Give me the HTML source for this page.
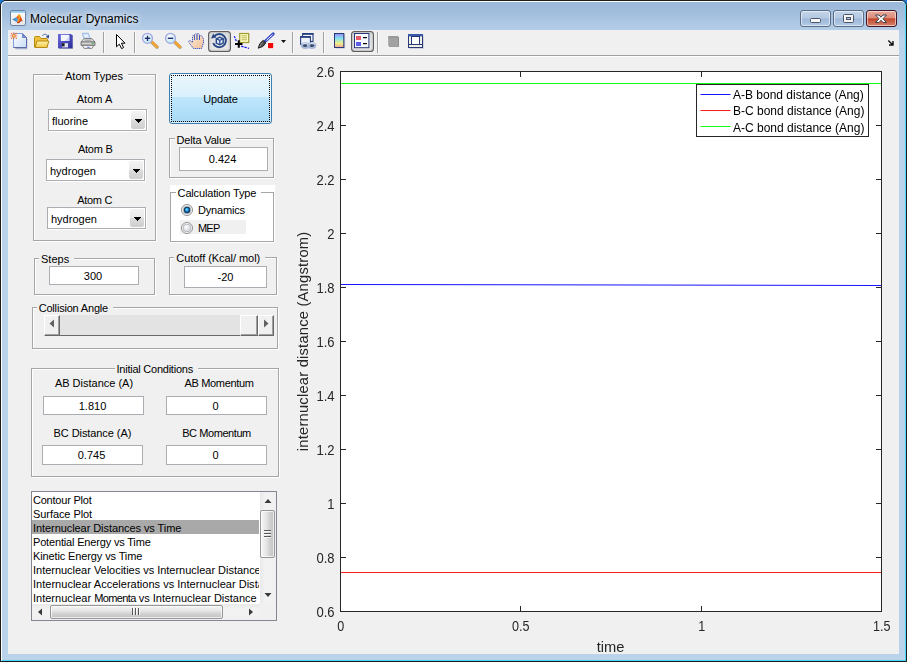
<!DOCTYPE html>
<html>
<head>
<meta charset="utf-8">
<title>Molecular Dynamics</title>
<style>
html,body{margin:0;padding:0;}
body{width:907px;height:662px;overflow:hidden;background:#1a78d0;font-family:"Liberation Sans",sans-serif;font-size:11px;color:#000;position:relative;}
.abs{position:absolute;}
#win{position:absolute;left:0;top:0;width:905px;height:660px;border:1px solid #1c1c1c;border-radius:6px 6px 0 0;background:#bad2ea;overflow:hidden;}
#winin{position:absolute;left:0;top:0;width:903px;height:658px;border:1px solid #fff;border-right-color:#45d8f6;border-bottom-color:#45d8f6;border-radius:5px 5px 0 0;
 background:linear-gradient(to bottom,#9cb8d8 0px,#a3bfde 12px,#b4cde8 28px,#bad2ea 40px);}
#title{position:absolute;left:30px;top:12px;font-size:12px;line-height:14px;color:#000;white-space:nowrap;letter-spacing:0.03px;text-shadow:0 0 5px rgba(255,255,255,.9),0 0 8px rgba(255,255,255,.7),0 0 12px rgba(255,255,255,.5);}
#client{position:absolute;left:8px;top:30px;width:891px;height:624px;background:#f0f0f0;}
#tbline{position:absolute;left:0;top:25px;width:891px;height:1px;background:#a0a0a0;}
#tbline2{position:absolute;left:0;top:26px;width:891px;height:1px;background:#fff;}
.cap{position:absolute;top:10px;height:15px;border:1px solid #5a6c84;border-radius:3px;box-shadow:inset 0 0 0 1px rgba(255,255,255,.55);
 background:linear-gradient(to bottom,#c3d5ea 0,#b4c8e2 48%,#9fb8d8 52%,#b2cae6 100%);}
#close{background:linear-gradient(to bottom,#e9aa9c 0,#dc8c7a 46%,#c2462a 52%,#d4836c 100%);border-color:#431422;}
.t{position:absolute;white-space:nowrap;line-height:13px;font-size:11px;}
.c{text-align:center;}
.panel{position:absolute;border:1px solid #a6a6a6;box-shadow:1px 1px 0 #fff, inset 1px 1px 0 #fff;}
.ptitle{position:absolute;background:#f0f0f0;white-space:nowrap;line-height:13px;font-size:11px;padding:0 5px 0 2px;}
.edit{position:absolute;background:#fff;border:1px solid #abadb3;box-sizing:border-box;text-align:center;font-size:11px;}
.combo{position:absolute;background:#fff;border:1px solid #abadb3;box-sizing:border-box;font-size:11px;box-shadow:1px 1px 0 #fff;}
.combo span{position:absolute;left:3px;top:5px;line-height:13px;}
.combo i{position:absolute;right:1px;top:1px;width:14px;height:18px;background:linear-gradient(to bottom,#f2f2f2 0,#eaeaea 47%,#dcdcdc 50%,#cfcfcf 100%);border-radius:2px;}
.combo i svg{position:absolute;left:4px;top:8px;}
.combo span{color:#000;}
#upd{position:absolute;left:169px;top:73px;width:101px;height:49px;border:1px solid #3c7fb1;border-radius:3px;
 background:linear-gradient(to bottom,#eaf6fd 0,#d9f0fc 46%,#bee6fd 47%,#a7d9f5 100%);box-shadow:inset 0 0 0 1px rgba(255,255,255,.6);}
#updin{position:absolute;left:1px;top:1px;right:1px;bottom:1px;border:1px dotted #000;}
#upd span{position:absolute;left:0;width:100%;text-align:center;top:19px;line-height:13px;font-size:11px;letter-spacing:-0.2px;}
.radio{position:absolute;width:12px;height:12px;}
.sbtn{position:absolute;box-sizing:border-box;background:#f0f0f0;border-left:1px solid #fff;border-top:1px solid #fff;border-right:1px solid #696969;border-bottom:1px solid #696969;box-shadow:inset -1px -1px 0 #a0a0a0;}
#lb{position:absolute;left:31px;top:491px;width:244px;height:128px;border:1px solid #828790;background:#fff;overflow:hidden;}
#lbitems{position:absolute;left:0;top:0;width:227px;height:112px;overflow:hidden;}
#lbitems div{height:14px;line-height:16px;font-size:11px;white-space:nowrap;padding-left:1px;overflow:hidden;}
#lbitems div.sel{background:#a9a9a9;}
</style>
</head>
<body>
<div id="win"><div id="winin"></div></div>
<div id="title">Molecular Dynamics</div>
<!-- caption buttons -->
<div class="cap" style="left:800px;width:29px;"></div>
<div class="cap" style="left:833px;width:29px;"></div>
<div class="cap" id="close" style="left:866px;width:29px;"></div>

<div id="client">
<div id="tbline"></div><div id="tbline2"></div>



</div>
<!--GTITLESTART-->
<svg class="abs" style="left:0;top:0" width="907" height="30" viewBox="0 0 907 30">
<defs>
<linearGradient id="gico" x1="0" y1="0" x2="0" y2="1"><stop offset="0" stop-color="#ffffff"/><stop offset="1" stop-color="#e6e6e6"/></linearGradient>
<linearGradient id="gicot" x1="0" y1="0" x2="0" y2="1"><stop offset="0" stop-color="#8cc4f0"/><stop offset="1" stop-color="#b8dcf8"/></linearGradient>
<linearGradient id="gml" x1="0" y1="0" x2="1" y2="0"><stop offset="0" stop-color="#3a78c0"/><stop offset="1" stop-color="#64a8d8"/></linearGradient>
<linearGradient id="gmr" x1="0" y1="0" x2="0" y2="1"><stop offset="0" stop-color="#f8c020"/><stop offset=".35" stop-color="#e86018"/><stop offset="1" stop-color="#b82818"/></linearGradient>
</defs>
<rect x="10.5" y="10.5" width="15" height="15" rx="1.5" fill="url(#gico)" stroke="#6c84a4" stroke-width="1"/>
<rect x="11" y="11" width="14" height="2" fill="url(#gicot)"/>
<path d="M12.2 19.6L16.2 17.2L18.2 19.2L17 22.2Z" fill="url(#gml)"/>
<path d="M16.2 17.2L18.6 14.6Q19.5 13.4 20.2 15L22.8 21.6Q21.5 20.6 20.6 21.4Q19.2 23.6 17.6 23.2Q17 23 17 22.2L18.2 19.2Z" fill="url(#gmr)"/>
<path d="M18.2 19.2L19.4 14.2Q19.9 14 20.2 15L19.4 20.6Q18.6 22.6 17.4 22.6Z" fill="#f8b828" opacity=".85"/>
<rect x="810.5" y="18.5" width="10" height="4" rx="1" fill="#f8f8f8" stroke="#4a5668" stroke-width="1"/>
<rect x="843.5" y="14.5" width="10" height="8" rx="1" fill="#f4f4f4" stroke="#4a5668" stroke-width="1"/><rect x="846.5" y="17.5" width="4" height="2" fill="#b8c6dc" stroke="#4a5668" stroke-width="1"/>
<path d="M875.5 15H879L881 17.2L883 15H886.5L883 18.8L886.5 22.5H883L881 20.3L879 22.5H875.5L879 18.8Z" fill="#fbfbfb" stroke="#3c4250" stroke-width="1" stroke-linejoin="round"/>
</svg>
<!--GTITLEEND-->
<!--GTBSTART-->
<svg class="abs" style="left:0;top:0" width="907" height="58" viewBox="0 0 907 58">
<defs>
<linearGradient id="gpage" x1="0" y1="0" x2="1" y2="1"><stop offset="0" stop-color="#ffffff"/><stop offset="1" stop-color="#c8dcf8"/></linearGradient>
<linearGradient id="gfold" x1="0" y1="0" x2="0" y2="1"><stop offset="0" stop-color="#fff2a8"/><stop offset="1" stop-color="#f2c84a"/></linearGradient>
<linearGradient id="gsave" x1="0" y1="0" x2="1" y2="1"><stop offset="0" stop-color="#6a6ae0"/><stop offset="1" stop-color="#2c2c98"/></linearGradient>
<linearGradient id="gcb" x1="0" y1="0" x2="0" y2="1"><stop offset="0" stop-color="#9a8cf2"/><stop offset=".35" stop-color="#82e2f0"/><stop offset=".7" stop-color="#f2f088"/><stop offset="1" stop-color="#f2a098"/></linearGradient>
<linearGradient id="gtog" x1="0" y1="0" x2="0" y2="1"><stop offset="0" stop-color="#dcdcdc"/><stop offset="1" stop-color="#eaeaea"/></linearGradient>
<radialGradient id="glens" cx=".4" cy=".35" r=".7"><stop offset="0" stop-color="#ffffff"/><stop offset="1" stop-color="#b8e4f0"/></radialGradient>
<linearGradient id="ghand" x1="0" y1="0" x2="1" y2="1"><stop offset="0" stop-color="#fff0e0"/><stop offset="1" stop-color="#f0c098"/></linearGradient>
</defs>
<rect x="103" y="32" width="1" height="21" fill="#a0a0a0" shape-rendering="crispEdges"/><rect x="104" y="32" width="1" height="21" fill="#fafafa" shape-rendering="crispEdges"/>
<rect x="134" y="32" width="1" height="21" fill="#a0a0a0" shape-rendering="crispEdges"/><rect x="135" y="32" width="1" height="21" fill="#fafafa" shape-rendering="crispEdges"/>
<rect x="292" y="32" width="1" height="21" fill="#a0a0a0" shape-rendering="crispEdges"/><rect x="293" y="32" width="1" height="21" fill="#fafafa" shape-rendering="crispEdges"/>
<rect x="323" y="32" width="1" height="21" fill="#a0a0a0" shape-rendering="crispEdges"/><rect x="324" y="32" width="1" height="21" fill="#fafafa" shape-rendering="crispEdges"/>
<rect x="377" y="32" width="1" height="21" fill="#a0a0a0" shape-rendering="crispEdges"/><rect x="378" y="32" width="1" height="21" fill="#fafafa" shape-rendering="crispEdges"/>
<path d="M14.5 34.5H22.5L26.5 38.5V48.5H14.5Z" fill="#6a78b0" transform="translate(0.8 0.8)" opacity=".55"/>
<path d="M13.5 33.5H22.5L26.5 37.5V47.5H13.5Z" fill="url(#gpage)" stroke="#7f9fe0" stroke-width="1"/>
<path d="M26.5 37.5V47.5H13.5" fill="none" stroke="#5a6aa8" stroke-width="1"/>
<path d="M22.5 33.5V37.5H26.5Z" fill="#7088d8" stroke="#5a6aa8" stroke-width=".6"/>
<g fill="#e8663a"><circle cx="10.9" cy="35.8" r=".6"/><circle cx="16.9" cy="35.8" r=".6"/><circle cx="13.9" cy="32.9" r=".6"/><circle cx="13.9" cy="38.8" r=".6"/><circle cx="11.6" cy="33.5" r=".7"/><circle cx="16.3" cy="33.5" r=".7"/><circle cx="11.6" cy="38.2" r=".7"/><circle cx="16.3" cy="38.2" r=".7"/></g><circle cx="13.9" cy="35.8" r="2.1" fill="#ec7848"/><circle cx="13.9" cy="35.8" r="1" fill="#e8e060"/>
<path d="M42.3 35.8C44 33.6 46.6 33.8 47.8 36.2" fill="none" stroke="#4a6aa8" stroke-width="1"/><path d="M49.2 34.6L48.8 38.6L45.8 37Z" fill="#2d4f98"/>
<path d="M34.5 47V37.5Q34.5 36.5 35.5 36.5H39.5L41 38.5H46.5Q47.5 38.5 47.5 39.5V47Z" fill="#f0c23c" stroke="#b88a10" stroke-width="1"/>
<path d="M35 47.5L37 41H48.8L47 47.5Z" fill="url(#gfold)" stroke="#b88a10" stroke-width="1"/>
<rect x="59" y="35" width="14" height="14" fill="#4a5a8a" opacity=".5"/>
<path d="M58 34H71L72.5 35.5V48.3H58Z" fill="url(#gsave)"/>
<rect x="60.8" y="34.8" width="8.5" height="6.2" fill="#f4f6fc"/><path d="M65 41L69.3 36V41Z" fill="#cfd8f0"/>
<rect x="62" y="43.2" width="6" height="4.2" fill="#e6e6ee"/><rect x="62" y="43.2" width="2.6" height="3.2" fill="#1c1c28"/>
<path d="M82.2 33.2H88.3L90.4 38.6H83.8Z" fill="#b4d4f8" stroke="#88a8d8" stroke-width=".6"/><path d="M83.6 34.4H87.8L89 37.6H84.6Z" fill="#e8f2fe"/>
<path d="M84 38.6H92L95 42H81Z" fill="#dedede" stroke="#6c6c6c" stroke-width=".8"/>
<path d="M81 42H95V45.4H81Z" fill="#bcbcbc" stroke="#646464" stroke-width=".8"/>
<path d="M82.2 45.4H93.8L92 48.4H84Z" fill="#f2f2f2" stroke="#707070" stroke-width=".8"/>
<path d="M84.8 40.2H91.4" stroke="#8a8a8a" stroke-width=".8"/><path d="M82 43.2H91" stroke="#e8e8e8" stroke-width=".8"/>
<rect x="92" y="42.6" width="1.3" height="1.3" fill="#40c040"/><rect x="87.2" y="46.8" width="2.4" height="1" fill="#5070d0"/>
<path d="M116.5 34.5V46.8L119.3 44.2L121.6 48.6L123.6 47.6L121.4 43.2H125L116.5 34.5Z" fill="#fff" stroke="#000" stroke-width="1" stroke-linejoin="miter"/>
<path d="M151.8 42.2L157.1 47.2" stroke="#7a5a20" stroke-width="3.4" stroke-linecap="round" opacity=".5"/>
<path d="M151.7 41.8L156.9 46.8" stroke="#f0a432" stroke-width="2.6" stroke-linecap="round"/>
<circle cx="147.5" cy="38.3" r="5" fill="url(#glens)" stroke="#a2a6e0" stroke-width="1.2"/>
<path d="M144.8 38.3H150.2" stroke="#1c2c6c" stroke-width="1.4"/>
<path d="M147.5 35.6V41" stroke="#1c2c6c" stroke-width="1.4"/>
<path d="M174.8 42.2L180.1 47.2" stroke="#7a5a20" stroke-width="3.4" stroke-linecap="round" opacity=".5"/>
<path d="M174.7 41.8L179.9 46.8" stroke="#f0a432" stroke-width="2.6" stroke-linecap="round"/>
<circle cx="170.5" cy="38.3" r="5" fill="url(#glens)" stroke="#a2a6e0" stroke-width="1.2"/>
<path d="M167.8 38.3H173.2" stroke="#1c2c6c" stroke-width="1.4"/>
<path d="M193.5 48.5L189 42.5Q188 40.5 190 40.5L192.5 42.5V36Q193.5 34.5 194.5 36V40V34.5Q195.8 33 197 34.5V40V34Q198.3 32.8 199.5 34.5V40V36Q200.8 34.8 202 36.2L203.5 39V43L201.5 48.5Z" fill="url(#ghand)" stroke="#2848c0" stroke-width=".9" stroke-dasharray="1.3 .7"/>
<rect x="208.6" y="31.6" width="21.8" height="19.8" rx="3" fill="url(#gtog)" stroke="#606060" stroke-width="1.2"/><rect x="209.8" y="32.8" width="19.4" height="17.4" rx="2" fill="none" stroke="#c8c8c8" stroke-width="1"/>
<path d="M214.3 36.3A6.6 6.6 0 1 1 213.2 43.2" fill="none" stroke="#284888" stroke-width="1.9"/><path d="M213.2 43.2A6.6 6.6 0 0 0 217 47.2" fill="none" stroke="#284888" stroke-width="1.4" opacity=".45"/>
<path d="M211 38.5L213.2 33.6L216.3 37.6Z" fill="#284888"/>
<path d="M216.3 38.8L219.8 37.2L223.2 38.8V43L219.8 44.8L216.3 43Z" fill="#dfe8f8" stroke="#284888" stroke-width="1.4"/><path d="M216.3 38.8L219.8 40.4L223.2 38.8M219.8 40.4V44.8" fill="none" stroke="#284888" stroke-width="1.2"/>
<rect x="239.7" y="33.5" width="9" height="9" fill="#ffffc4" stroke="#a09830" stroke-width="1.2"/><path d="M241.5 35.8H247M241.5 37.8H247M241.5 39.8H247" stroke="#b0a848" stroke-width=".9"/>
<path d="M234.3 36.3L236.6 41.6" stroke="#1010f0" stroke-width="1.2" stroke-dasharray="2 1"/><path d="M241.2 46.2L249 48.3" stroke="#1010f0" stroke-width="1.2" stroke-dasharray="2.4 1"/>
<path d="M235 44H242.5M238.8 40.2V47.8" stroke="#000" stroke-width="2"/>
<path d="M273.2 33.8L265 41.5" stroke="#3848c0" stroke-width="3" stroke-linecap="round"/><path d="M272.6 34.6L266.4 40.4" stroke="#f0f2ff" stroke-width="1"/>
<path d="M263.2 40.3L265.8 43Q263.5 47.5 258.2 48.2Q259 43 263.2 40.3Z" fill="#4a4a4a" stroke="#101010" stroke-width=".8"/><path d="M262.6 42.5Q260.8 44.5 259.8 46.8" stroke="#b0b0b0" stroke-width=".8" fill="none"/>
<rect x="267.3" y="42.3" width="6.6" height="6.6" fill="#fff"/><rect x="268" y="43" width="5.2" height="5.2" fill="#f00808"/>
<path d="M281 40H286L283.5 43Z" fill="#111"/>
<rect x="302.6" y="33.8" width="10.4" height="7.6" fill="#f4f6fc" stroke="#284080" stroke-width="1.1"/><rect x="302.1" y="33" width="11.4" height="1.8" fill="#284080"/>
<rect x="300.6" y="36.8" width="9.8" height="7.6" fill="#eef2fa" stroke="#284080" stroke-width="1.1"/><rect x="300.1" y="36" width="10.8" height="1.8" fill="#284080"/>
<ellipse cx="305.3" cy="45.6" rx="3.6" ry="2.4" fill="#34446c" stroke="#a9bad6" stroke-width="1.9"/><ellipse cx="311.8" cy="45.6" rx="3.6" ry="2.4" fill="#34446c" stroke="#a9bad6" stroke-width="1.9"/><path d="M302.5 44.2Q305.3 42.6 308 44.2M309 44.2Q311.8 42.6 314.6 44.2" stroke="#eef3fa" stroke-width=".8" fill="none"/><path d="M306.8 45.6H310.2" stroke="#a9bad6" stroke-width="1.6"/>
<rect x="335.5" y="34.5" width="9.6" height="14" fill="#8090b0" opacity=".45"/>
<rect x="334.5" y="33.5" width="9.3" height="14" fill="url(#gcb)" stroke="#283878" stroke-width="1"/>
<rect x="351.6" y="31.6" width="21.8" height="19.8" rx="3" fill="url(#gtog)" stroke="#606060" stroke-width="1.2"/><rect x="352.8" y="32.8" width="19.4" height="17.4" rx="2" fill="none" stroke="#c8c8c8" stroke-width="1"/>
<rect x="354.5" y="33.5" width="14.4" height="14.2" fill="#f6f9ff" stroke="#283878" stroke-width="1"/>
<rect x="356" y="36" width="5" height="4" fill="#e85c68"/><rect x="356" y="42" width="5" height="4" fill="#5c5ce8"/><rect x="363" y="37" width="4" height="1.2" fill="#000"/><rect x="363" y="43" width="4" height="1.2" fill="#000"/>
<rect x="389" y="37" width="10" height="9.8" fill="#8a8a8a"/><rect x="388.2" y="36.2" width="10" height="9.8" fill="#a2a2a2"/><rect x="388.2" y="36.2" width="10" height="1.6" fill="#969696"/>
<rect x="409.3" y="35.2" width="14.4" height="13.6" fill="#8090b0" opacity=".4"/>
<rect x="408.5" y="34.5" width="14" height="13" fill="#eceadc" stroke="#283878" stroke-width="1"/><rect x="408" y="34" width="15" height="2.4" fill="#3a58a8"/>
<rect x="411.5" y="36.5" width="8" height="8" fill="#fff" stroke="#283878" stroke-width="1"/><path d="M409 44.5H422" stroke="#283878" stroke-width="1"/>
<path d="M410 37V44M421 37V44" stroke="#fff" stroke-width="1" stroke-dasharray="1 1"/><path d="M410 46H421" stroke="#fff" stroke-width="1" stroke-dasharray="1 1"/>
<path d="M888.3 40.6L892.3 44.4M893 41V45H889" stroke="#111" stroke-width="1.4" fill="none"/>
</svg>
<!--GTBEND-->
<!--GLEFTSTART-->
<div class="panel" style="left:33px;top:74px;width:121px;height:165px;"></div>
<div class="ptitle" style="left:63px;top:70px;">Atom Types</div>
<div class="t c" style="left:-5.5px;width:200px;top:93px;">Atom A</div>
<div class="combo" style="left:48px;top:109px;width:99px;height:22px;"><span>fluorine</span><i><svg width="7" height="4" viewBox="0 0 7 4" shape-rendering="crispEdges"><path d="M0 0H7V1H0ZM1 1H6V2H1ZM2 2H5V3H2ZM3 3H4V4H3Z" fill="#000"/></svg></i></div>
<div class="t c" style="left:-4.700000000000003px;width:200px;top:143px;letter-spacing:-0.2px;">Atom B</div>
<div class="combo" style="left:46px;top:159px;width:99px;height:22px;"><span>hydrogen</span><i><svg width="7" height="4" viewBox="0 0 7 4" shape-rendering="crispEdges"><path d="M0 0H7V1H0ZM1 1H6V2H1ZM2 2H5V3H2ZM3 3H4V4H3Z" fill="#000"/></svg></i></div>
<div class="t c" style="left:-5.400000000000006px;width:200px;top:194px;letter-spacing:-0.3px;">Atom C</div>
<div class="combo" style="left:47px;top:207px;width:99px;height:22px;"><span>hydrogen</span><i><svg width="7" height="4" viewBox="0 0 7 4" shape-rendering="crispEdges"><path d="M0 0H7V1H0ZM1 1H6V2H1ZM2 2H5V3H2ZM3 3H4V4H3Z" fill="#000"/></svg></i></div>
<div id="upd"><div id="updin"></div><span>Update</span></div>
<div class="panel" style="left:169px;top:138px;width:103px;height:38px;"></div>
<div class="ptitle" style="left:174.5px;top:134px;letter-spacing:-0.16px;">Delta Value</div>
<div class="edit" style="left:179px;top:147px;width:89px;height:24px;"><span style="position:absolute;left:-1px;width:100%;top:5px;line-height:13px;">0.424</span></div>
<div class="abs" style="left:170px;top:185px;width:105px;height:58px;background:#fff;"></div>
<div class="panel" style="left:170px;top:192px;width:102px;height:48px;"></div>
<div class="ptitle" style="left:175.6px;top:187px;background:#fff;letter-spacing:-0.16px;">Calculation Type</div>
<div class="abs" style="left:180px;top:220px;width:66px;height:14px;background:#f0f0f0;"></div>
<svg class="radio" style="left:181px;top:204px;" viewBox="0 0 12 12"><defs><radialGradient id="rg1" cx=".4" cy=".35" r=".75"><stop offset="0" stop-color="#fff"/><stop offset="1" stop-color="#c8ccd6"/></radialGradient><radialGradient id="rg2" cx=".42" cy=".38" r=".6"><stop offset="0" stop-color="#8ae4ff"/><stop offset=".55" stop-color="#1e98e4"/><stop offset="1" stop-color="#0e62a8"/></radialGradient></defs><circle cx="6" cy="6" r="5.5" fill="#fff" stroke="#8e8f8f"/><circle cx="6" cy="6" r="3.9" fill="url(#rg1)" stroke="#b2b4b8" stroke-width=".9"/><circle cx="6" cy="6" r="3.2" fill="#0f3a5e"/><circle cx="6" cy="6" r="2.2" fill="url(#rg2)"/></svg>
<svg class="radio" style="left:181px;top:222px;" viewBox="0 0 12 12"><circle cx="6" cy="6" r="5.5" fill="#fff" stroke="#8e8f8f"/><circle cx="6" cy="6" r="3.9" fill="url(#rg1)" stroke="#b2b4b8" stroke-width=".9"/></svg>
<div class="t" style="left:198px;top:204px;letter-spacing:-0.19px;">Dynamics</div>
<div class="t" style="left:198px;top:222px;letter-spacing:-0.8px;">MEP</div>
<div class="panel" style="left:34px;top:258px;width:119px;height:35px;"></div>
<div class="ptitle" style="left:39px;top:253px;">Steps</div>
<div class="edit" style="left:49px;top:266px;width:90px;height:19px;"><span style="position:absolute;left:-1px;width:100%;top:3px;line-height:13px;">300</span></div>
<div class="panel" style="left:169px;top:257px;width:106px;height:36px;"></div>
<div class="ptitle" style="left:174.3px;top:252px;letter-spacing:-0.05px;">Cutoff (Kcal/ mol)</div>
<div class="edit" style="left:184px;top:266px;width:83px;height:22px;"><span style="position:absolute;left:0px;width:100%;top:4px;line-height:13px;">-20</span></div>
<div class="panel" style="left:32px;top:307px;width:244px;height:40px;"></div>
<div class="ptitle" style="left:36.7px;top:302px;letter-spacing:-0.19px;">Collision Angle</div>
<div class="abs" style="left:44px;top:315px;width:230px;height:21px;background:#e3e3e3;"></div>
<div class="abs" style="left:44px;top:335px;width:230px;height:1px;background:#696969;"></div>
<div class="sbtn" style="left:44px;top:315px;width:16px;height:21px;"><svg class="abs" style="left:4px;top:3px" width="6" height="9" viewBox="0 0 6 9"><path d="M5 0.5V8.5L0.5 4.5Z" fill="#606060"/></svg></div>
<div class="sbtn" style="left:240px;top:315px;width:18px;height:21px;"></div>
<div class="sbtn" style="left:258px;top:315px;width:16px;height:21px;"><svg class="abs" style="left:4px;top:3px" width="6" height="9" viewBox="0 0 6 9"><path d="M1 0.5V8.5L5.5 4.5Z" fill="#606060"/></svg></div>
<div class="panel" style="left:31px;top:368px;width:246px;height:107px;"></div>
<div class="ptitle" style="left:114.5px;top:363px;letter-spacing:-0.24px;">Initial Conditions</div>
<div class="t c" style="left:-6px;width:200px;top:377px;">AB Distance (A)</div>
<div class="t c" style="left:119px;width:200px;top:377px;letter-spacing:-0.33px;">AB Momentum</div>
<div class="edit" style="left:43px;top:396px;width:101px;height:19px;"><span style="position:absolute;left:-1px;width:100%;top:3px;line-height:13px;">1.810</span></div>
<div class="edit" style="left:166px;top:396px;width:101px;height:19px;"><span style="position:absolute;left:-1px;width:100%;top:3px;line-height:13px;">0</span></div>
<div class="t c" style="left:-7.599999999999994px;width:200px;top:427px;letter-spacing:-0.08px;">BC Distance (A)</div>
<div class="t c" style="left:116.5px;width:200px;top:427px;letter-spacing:-0.42px;">BC Momentum</div>
<div class="edit" style="left:42px;top:445px;width:101px;height:20px;"><span style="position:absolute;left:-1px;width:100%;top:3px;line-height:13px;">0.745</span></div>
<div class="edit" style="left:166px;top:445px;width:101px;height:20px;"><span style="position:absolute;left:-1px;width:100%;top:3px;line-height:13px;">0</span></div>
<div id="lb">
<div id="lbitems">
<div style="letter-spacing:-0.22px">Contour Plot</div>
<div style="letter-spacing:-0.07px">Surface Plot</div>
<div class="sel" style="letter-spacing:-0.07px">Internuclear Distances vs Time</div>
<div style="letter-spacing:-0.17px">Potential Energy vs Time</div>
<div style="letter-spacing:-0.12px">Kinetic Energy vs Time</div>
<div style="letter-spacing:-0.02px">Internuclear Velocities vs Internuclear Distance</div>
<div style="letter-spacing:0.02px">Internuclear Accelerations vs Internuclear Distance</div>
<div style="letter-spacing:0px">Internuclear <span style="letter-spacing:-0.62px">Momenta</span> vs Internuclear Distance</div>
</div>
<div class="abs" style="left:228px;top:0;width:16px;height:111px;background:linear-gradient(to right,#e9e9e9,#f2f2f2 30%,#f0f0f0);"></div>
<div class="abs" style="left:0;top:112px;width:227px;height:16px;background:linear-gradient(to bottom,#e9e9e9,#f2f2f2 30%,#f0f0f0);"></div>
<div class="abs" style="left:227px;top:111px;width:17px;height:17px;background:#f0f0f0;"></div>
<svg class="abs" style="left:232px;top:7px" width="8" height="4" viewBox="0 0 8 4"><path d="M0.5 4L4 0L7.5 4Z" fill="#3a3a3a"/></svg>
<svg class="abs" style="left:232px;top:101px" width="8" height="4" viewBox="0 0 8 4"><path d="M0.5 0L4 4L7.5 0Z" fill="#3a3a3a"/></svg>
<div class="abs" style="left:228px;top:18px;width:13px;height:46px;border:1px solid #979797;border-radius:2px;background:linear-gradient(to right,#f6f6f6 0,#e6e6e6 40%,#d2d2d2 65%,#c2c2c2 100%);box-shadow:inset 0 0 0 1px rgba(255,255,255,.7);"></div>
<svg class="abs" style="left:232px;top:38px" width="8" height="9" viewBox="0 0 8 9" shape-rendering="crispEdges"><path d="M0 0H7V1H0ZM0 3H7V4H0ZM0 6H7V7H0Z" fill="#585858"/><path d="M0 1H7V2H0ZM0 4H7V5H0ZM0 7H7V8H0Z" fill="#fff" opacity=".75"/></svg>
<svg class="abs" style="left:6px;top:116px" width="4" height="8" viewBox="0 0 4 8"><path d="M4 0.5L0 4L4 7.5Z" fill="#3a3a3a"/></svg>
<svg class="abs" style="left:217px;top:116px" width="4" height="8" viewBox="0 0 4 8"><path d="M0 0.5L4 4L0 7.5Z" fill="#3a3a3a"/></svg>
<div class="abs" style="left:18px;top:113px;width:171px;height:12px;border:1px solid #979797;border-radius:2px;background:linear-gradient(to bottom,#f6f6f6 0,#e6e6e6 40%,#d2d2d2 65%,#c2c2c2 100%);box-shadow:inset 0 0 0 1px rgba(255,255,255,.7);"></div>
<svg class="abs" style="left:100px;top:116px" width="9" height="8" viewBox="0 0 9 8" shape-rendering="crispEdges"><path d="M0 0V7H1V0ZM3 0V7H4V0ZM6 0V7H7V0Z" fill="#585858"/><path d="M1 0V7H2V0ZM4 0V7H5V0ZM7 0V7H8V0Z" fill="#fff" opacity=".75"/></svg>
</div>
<!--GLEFTEND-->
<!--GPLOTSTART-->
<svg class="abs" style="left:0;top:0;will-change:transform" width="907" height="662" viewBox="0 0 907 662" font-family="Liberation Sans, sans-serif">
<rect x="340" y="71" width="542" height="541" fill="#fff"/>
<path d="M341 83.5H881" stroke="#14ff14" stroke-width="1.1" fill="none"/>
<path d="M341 284.5L881 285.5" stroke="#1414ff" stroke-width="1.1" fill="none"/>
<path d="M341 572.5H881" stroke="#ff2020" stroke-width="1.1" fill="none"/>
<g fill="#262626" shape-rendering="crispEdges">
<rect x="340" y="71" width="542" height="1"/>
<rect x="340" y="611" width="542" height="1"/>
<rect x="340" y="71" width="1" height="541"/>
<rect x="881" y="71" width="1" height="541"/>
<rect x="341" y="125" width="5" height="1"/>
<rect x="876" y="125" width="5" height="1"/>
<rect x="341" y="179" width="5" height="1"/>
<rect x="876" y="179" width="5" height="1"/>
<rect x="341" y="233" width="5" height="1"/>
<rect x="876" y="233" width="5" height="1"/>
<rect x="341" y="287" width="5" height="1"/>
<rect x="876" y="287" width="5" height="1"/>
<rect x="341" y="341" width="5" height="1"/>
<rect x="876" y="341" width="5" height="1"/>
<rect x="341" y="395" width="5" height="1"/>
<rect x="876" y="395" width="5" height="1"/>
<rect x="341" y="449" width="5" height="1"/>
<rect x="876" y="449" width="5" height="1"/>
<rect x="341" y="503" width="5" height="1"/>
<rect x="876" y="503" width="5" height="1"/>
<rect x="341" y="557" width="5" height="1"/>
<rect x="876" y="557" width="5" height="1"/>
<rect x="520" y="72" width="1" height="5"/>
<rect x="520" y="606" width="1" height="5"/>
<rect x="701" y="72" width="1" height="5"/>
<rect x="701" y="606" width="1" height="5"/>
</g>
<g fill="#262626" font-size="14px">
<text transform="translate(334.6 77) scale(.93 1)" text-anchor="end">2.6</text>
<text transform="translate(334.6 131) scale(.93 1)" text-anchor="end">2.4</text>
<text transform="translate(334.6 185) scale(.93 1)" text-anchor="end">2.2</text>
<text transform="translate(334.6 239) scale(.93 1)" text-anchor="end">2</text>
<text transform="translate(334.6 293) scale(.93 1)" text-anchor="end">1.8</text>
<text transform="translate(334.6 347) scale(.93 1)" text-anchor="end">1.6</text>
<text transform="translate(334.6 401) scale(.93 1)" text-anchor="end">1.4</text>
<text transform="translate(334.6 455) scale(.93 1)" text-anchor="end">1.2</text>
<text transform="translate(334.6 509) scale(.93 1)" text-anchor="end">1</text>
<text transform="translate(334.6 563) scale(.93 1)" text-anchor="end">0.8</text>
<text transform="translate(334.6 617) scale(.93 1)" text-anchor="end">0.6</text>
<text transform="translate(340.7 631) scale(.9 1)" text-anchor="middle">0</text>
<text transform="translate(520.7 631) scale(.9 1)" text-anchor="middle">0.5</text>
<text transform="translate(701.7 631) scale(.9 1)" text-anchor="middle">1</text>
<text transform="translate(881.7 631) scale(.9 1)" text-anchor="middle">1.5</text>
</g>
<g fill="#262626" font-size="14.67px">
<text x="610.5" y="652" text-anchor="middle">time</text>
<text transform="translate(308 341.4) rotate(-90)" text-anchor="middle" letter-spacing="0.24">internuclear distance (Angstrom)</text>
</g>
<rect x="696.5" y="84.5" width="172" height="52" fill="#fff" stroke="#262626" stroke-width="1" shape-rendering="crispEdges"/>
<path d="M700.5 94.5H730.5" stroke="#1414ff" stroke-width="1"/>
<text x="733" y="98.8" font-size="12px" fill="#000">A-B bond distance (Ang)</text>
<path d="M700.5 110.5H730.5" stroke="#ff1a1a" stroke-width="1"/>
<text x="733" y="115.0" font-size="12px" fill="#000">B-C bond distance (Ang)</text>
<path d="M700.5 126.5H730.5" stroke="#14ff14" stroke-width="1"/>
<text x="733" y="131.5" font-size="12px" fill="#000">A-C bond distance (Ang)</text>
</svg>
<!--GPLOTEND-->
</body>
</html>
